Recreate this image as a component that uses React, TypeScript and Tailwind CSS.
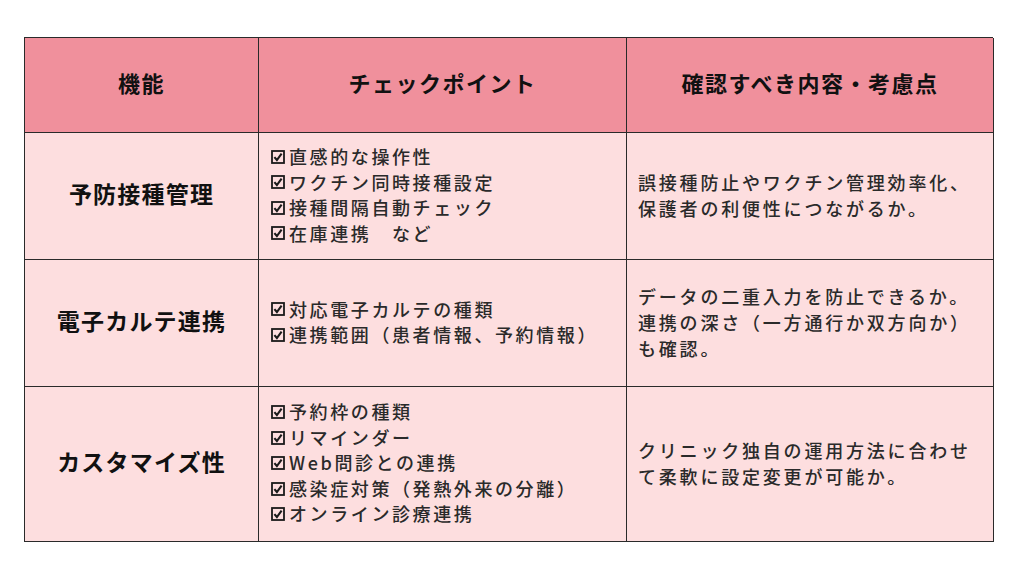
const font = "font-['Meiryo','Noto_Sans_CJK_JP',sans-serif]";

const Check = () => (
  <svg width="14" height="14" viewBox="0 0 14 14" className="mr-[4px] shrink-0">
    <rect x="1" y="1" width="12" height="12" fill="none" stroke="#1a1a1a" strokeWidth="1.8" />
    <path d="M3.4 7.1 L5.9 10 L10.6 3.6" fill="none" stroke="#1a1a1a" strokeWidth="2.1" />
  </svg>
);

const rows = [
  {
    name: "予防接種管理",
    checks: ["直感的な操作性", "ワクチン同時接種設定", "接種間隔自動チェック", "在庫連携　など"],
    note: ["誤接種防止やワクチン管理効率化、", "保護者の利便性につながるか。"],
    h: "h-[127px]",
  },
  {
    name: "電子カルテ連携",
    checks: ["対応電子カルテの種類", "連携範囲（患者情報、予約情報）"],
    note: ["データの二重入力を防止できるか。", "連携の深さ（一方通行か双方向か）", "も確認。"],
    h: "h-[127px]",
  },
  {
    name: "カスタマイズ性",
    checks: ["予約枠の種類", "リマインダー", "Web問診との連携", "感染症対策（発熱外来の分離）", "オンライン診療連携"],
    note: ["クリニック独自の運用方法に合わせ", "て柔軟に設定変更が可能か。"],
    h: "h-[155px]",
  },
];

const App = () => {
  return (
    <div className={`w-[1024px] h-[576px] bg-white pt-[37px] pl-[24px] ${font}`}>
      <div className="grid grid-cols-[234px_368px_367px] border-l border-t border-[#2a2a2a] w-[969px]">
        {["機能", "チェックポイント", "確認すべき内容・考慮点"].map((t) => (
          <div
            key={t}
            className="h-[95px] pb-[5px] bg-[#f0909c] border-r border-b border-[#2a2a2a] flex items-center justify-center text-[22px] font-bold tracking-[1.5px] text-[#111]"
          >
            {t}
          </div>
        ))}
        {rows.map((r) => (
          <div key={r.name} className="contents">
            <div
              className={`${r.h} pb-[5px] bg-[#fddedf] border-r border-b border-[#2a2a2a] flex items-center justify-center text-[23px] font-bold tracking-[1.2px] text-[#111]`}
            >
              {r.name}
            </div>
            <div
              className={`${r.h} pb-[2px] bg-[#fddedf] border-r border-b border-[#2a2a2a] flex flex-col justify-center pl-[12px] text-[18px] font-medium tracking-[2.6px] leading-[25.5px] text-[#2a2a2a]`}
            >
              {r.checks.map((c) => (
                <div key={c} className="flex items-center">
                  <Check />
                  <span>{c}</span>
                </div>
              ))}
            </div>
            <div
              className={`${r.h} pb-[2px] bg-[#fddedf] border-r border-b border-[#2a2a2a] flex flex-col justify-center pl-[11px] text-[18px] font-medium tracking-[2.8px] leading-[26px] text-[#2a2a2a]`}
            >
              {r.note.map((n) => (
                <div key={n} className="whitespace-nowrap">{n}</div>
              ))}
            </div>
          </div>
        ))}
      </div>
    </div>
  );
};

export default App;
